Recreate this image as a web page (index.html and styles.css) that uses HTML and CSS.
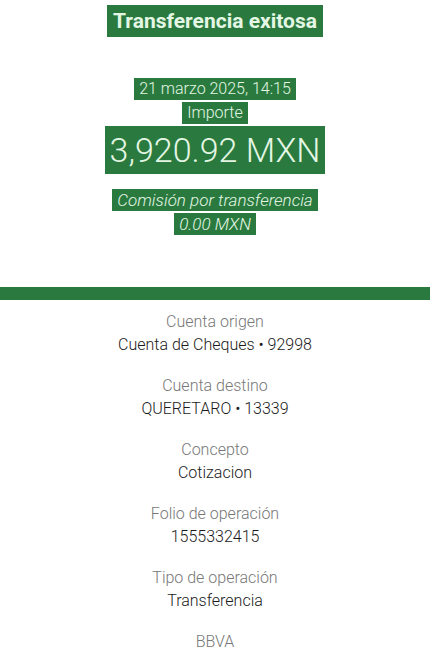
FILE: index.html
```html
<!DOCTYPE html>
<html lang="es">
<head>
  <meta charset="UTF-8" />
  <meta name="viewport" content="width=device-width, initial-scale=1.0"/>
  <title>Transferencia exitosa</title>
  <link rel="stylesheet" href="styles.css">
</head>
<body>
  <div class="header">
    <h2><span class="mark">Transferencia exitosa</span></h2>

    <div class="summary">
      <span class="mark">21 marzo 2025, 14:15</span>
      <span class="mark">Importe</span>
      <span class="mark amount">3,920.92 MXN</span>
      <span class="mark fee">Comisión por transferencia</span>
      <span class="mark fee">0.00 MXN</span>
    </div>
  </div>

  <div class="bar"></div>

  <div class="details">
    <div class="item">
      <div class="label">Cuenta origen</div>
      <div class="value">Cuenta de Cheques • 92998</div>
    </div>
    <div class="item">
      <div class="label">Cuenta destino</div>
      <div class="value">QUERETARO • 13339</div>
    </div>
    <div class="item">
      <div class="label">Concepto</div>
      <div class="value">Cotizacion</div>
    </div>
    <div class="item">
      <div class="label">Folio de operación</div>
      <div class="value">1555332415</div>
    </div>
    <div class="item">
      <div class="label">Tipo de operación</div>
      <div class="value">Transferencia</div>
    </div>
    <div class="item">
      <div class="label">BBVA</div>
    </div>
  </div>
</body>
</html>
```
FILE: styles.css
```css
body {
  font-family: Roboto, "Open Sans", sans-serif;
  background: white;
  margin: 0;
  color: #222;
}
.header {
  text-align: center;
}
.mark {
  background: #2a7a3f;
  color: #e4f7e4;
  padding: 0 5px;
}
h2 {
  margin: 0;
  padding-top: 8px;
  font-size: 21px;
  font-weight: bold;
  line-height: 26px;
}
h2 .mark {
  padding: 4px 6px;
}
.summary {
  display: flex;
  flex-direction: column;
  align-items: center;
  margin-top: 44px;
  font-weight: 300;
  font-size: 16px;
  line-height: 22px;
}
.summary .mark {
  margin-bottom: 2px;
}
.summary .amount {
  font-size: 34px;
  line-height: 48px;
  margin: 0 0 15px;
}
.fee {
  font-style: italic;
  font-size: 17px;
}
.bar {
  height: 13px;
  background: #2a7a3f;
  margin-top: 50px;
}
.details {
  text-align: center;
  padding-top: 10px;
}
.item {
  margin-bottom: 18px;
}
.label {
  color: #777;
  font-weight: 300;
  font-size: 16px;
  line-height: 23px;
}
.value {
  font-size: 16px;
  font-weight: 300;
  line-height: 23px;
  color: #1a1a1a;
}
```
